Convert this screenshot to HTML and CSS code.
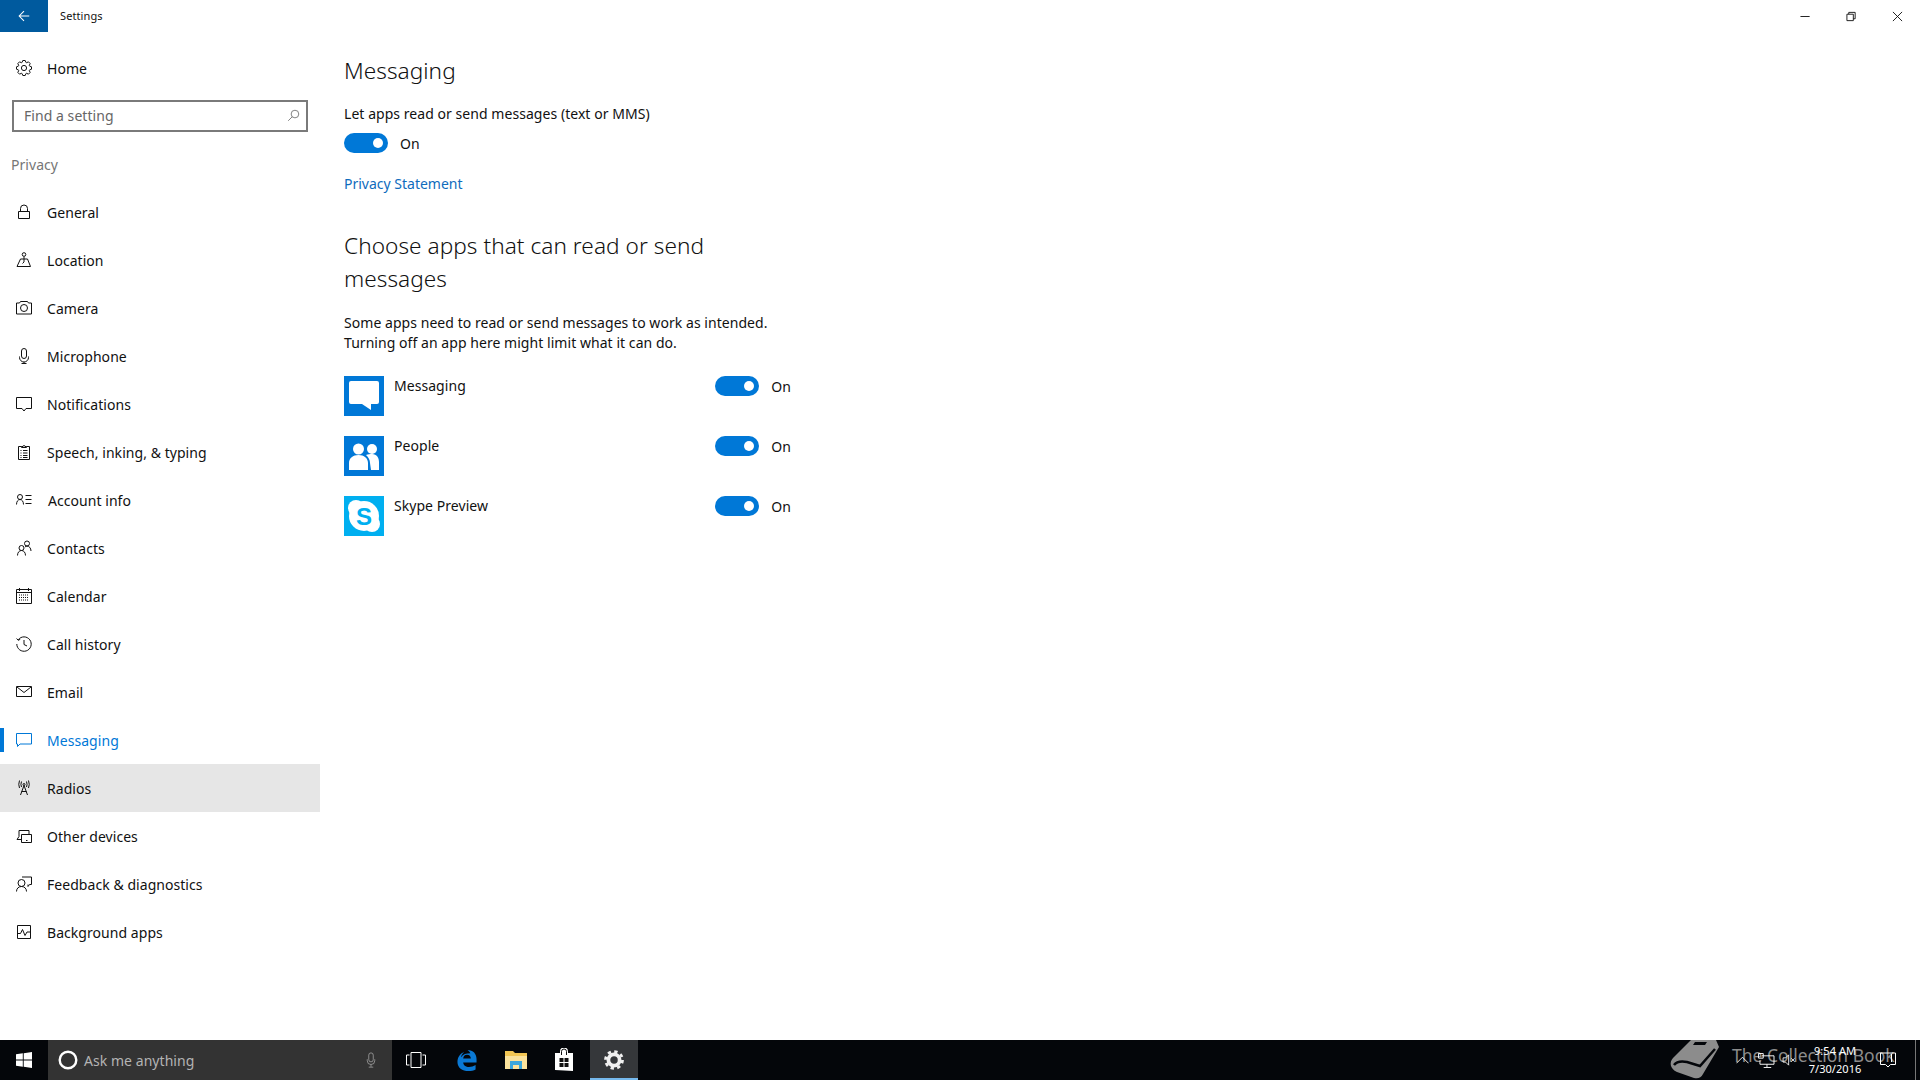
FILE: index.html
```
<!DOCTYPE html>
<html lang="en">
<head>
<meta charset="utf-8">
<title>Settings</title>
<link rel="stylesheet" href="styles.css">
</head>
<body>
<div class="window">
  <header class="titlebar">
    <button class="back"><svg viewBox="0 0 16 16" class="ico14"><path d="M14 8H2.500M8 2.500 2.500 8 8 13.500"/></svg></button>
    <span class="app-title">Settings</span>
    <div class="caption">
      <span class="cap-btn"><svg viewBox="0 0 12 12" class="ico11"><path d="M.5 6h10"/></svg></span>
      <span class="cap-btn"><svg viewBox="0 0 12 12" class="ico11"><path d="M1 3.500h7v7H1zM3 3.500V1.500h7v7H8"/></svg></span>
      <span class="cap-btn"><svg viewBox="0 0 12 12" class="ico11"><path d="M1 1l10 10M11 1 1 11"/></svg></span>
    </div>
  </header>
  <div class="main">
    <nav class="sidebar">
      <a class="nav-item home">
        <svg viewBox="0 0 16 16" class="nav-ico"><circle cx="8" cy="8" r="2.600"/><path d="M6.080 2.420 6.810.49H9.190L9.920 2.420 10.590 2.700 12.470 1.850 14.150 3.530 13.300 5.410 13.580 6.080 15.510 6.810V9.190L13.580 9.920 13.300 10.590 14.150 12.470 12.470 14.150 10.590 13.300 9.920 13.580 9.190 15.510H6.810L6.080 13.580 5.410 13.300 3.530 14.150 1.850 12.470 2.700 10.590 2.420 9.920 .49 9.190V6.810L2.420 6.080 2.700 5.410 1.850 3.530 3.530 1.850 5.410 2.700Z"/></svg>
        <span>Home</span>
      </a>
      <div class="search"><span>Find a setting</span><svg viewBox="0 0 16 16" class="search-ico"><circle cx="9.800" cy="6.200" r="4.700"/><path d="M6.400 9.600 1.500 14.500"/></svg></div>
      <div class="group">Privacy</div>
      <a class="nav-item"><svg viewBox="0 0 16 16" class="nav-ico"><path d="M2.500 7.500h11v7h-11zM4.500 7.500V4.500a3.500 3.500 0 0 1 7 0v3"/></svg><span>General</span></a>
      <a class="nav-item"><svg viewBox="0 0 16 16" class="nav-ico"><circle cx="8" cy="2.500" r="1.800"/><path d="M8 4.500V10M4.500 7h7l3 7.500H1zM8 10l-1.500 1.500"/></svg><span>Location</span></a>
      <a class="nav-item"><svg viewBox="0 0 16 16" class="nav-ico"><path d="M.5 3h3l1-1.500h7l1 1.500h3v11H.5z"/><circle cx="8" cy="8" r="3.500"/></svg><span>Camera</span></a>
      <a class="nav-item"><svg viewBox="0 0 16 16" class="nav-ico"><rect x="5.500" y=".5" width="5" height="10" rx="2.500"/><path d="M3.500 8.500v1a4.500 4.500 0 0 0 9 0v-1M8 14v2M5.500 15.500h5"/></svg><span>Microphone</span></a>
      <a class="nav-item"><svg viewBox="0 0 16 16" class="nav-ico"><path d="M.5 1.500h15v11H10L8 15l-2-2.500H.5z"/></svg><span>Notifications</span></a>
      <a class="nav-item"><svg viewBox="0 0 16 16" class="nav-ico"><path d="M5.500 2.500h-3v13h11v-13h-3M5.500 3.500v-1h1.500a1 1 0 0 1 2 0h1.500v1zM4.500 6.500h1M7 6.500h4.500M4.500 9h1M7 9h4.500M4.500 11.500h1M7 11.500h4.500M4.500 13.500h1M7 13.500h4.500"/></svg><span>Speech, inking, &amp; typing</span></a>
      <a class="nav-item acct"><svg viewBox="0 0 16 16" class="nav-ico"><circle cx="4" cy="5" r="2.500"/><path d="M.5 12.500c0-3 1.500-5 3.500-5s3.500 2 3.500 5M9.500 3.500h6M9.500 7.500h6M9.500 11.500h6"/></svg><span>Account info</span></a>
      <a class="nav-item"><svg viewBox="0 0 16 16" class="nav-ico"><circle cx="5.500" cy="8" r="2.500"/><path d="M1.500 15.500c0-3 1.700-5 4-5s4 2 4 5"/><circle cx="11" cy="3.500" r="2.500"/><path d="M9 7c.6-.6 1.300-.9 2-.9 2.200 0 4 1.900 4 4.900"/></svg><span>Contacts</span></a>
      <a class="nav-item"><svg viewBox="0 0 16 16" class="nav-ico"><path d="M.5 1.500h15v14H.5zM.5 4.500h15M3.500 0v3M12.500 0v3"/><path class="dots" d="M3 7h10M3 9.500h10M3 12h10"/></svg><span>Calendar</span></a>
      <a class="nav-item"><svg viewBox="0 0 16 16" class="nav-ico"><path d="M2.200 3.800A7.200 7.200 0 1 1 .8 8M.6 2.500l1.600 1.800 2-1M8 4v4.500l3 1.500"/></svg><span>Call history</span></a>
      <a class="nav-item"><svg viewBox="0 0 16 16" class="nav-ico"><path d="M.5 2.500h15v10H.5zM1 3l7 5.500L15 3"/></svg><span>Email</span></a>
      <a class="nav-item active"><svg viewBox="0 0 16 16" class="nav-ico"><path d="M.5 1.500h15v10.500H4L1.500 14.500V12h-1z"/></svg><span>Messaging</span></a>
      <a class="nav-item hover"><svg viewBox="0 0 16 16" class="nav-ico"><circle cx="8" cy="4.500" r="1"/><path d="M5.500 1.500Q4.300 4.500 5.500 7M10.500 1.500Q11.700 4.500 10.500 7M3.500.5Q2 4.500 3.500 8M12.500.5Q14 4.500 12.500 8M8 5.500 4.500 15M8 5.500l3.500 9.500M5.500 11.500h5"/></svg><span>Radios</span></a>
      <a class="nav-item"><svg viewBox="0 0 16 16" class="nav-ico"><path d="M5.500 11.500H1l2-3V2.500h10V6M5.500 6.500h10v8h-10zM10 12.500h1.500"/></svg><span>Other devices</span></a>
      <a class="nav-item"><svg viewBox="0 0 16 16" class="nav-ico"><circle cx="5.500" cy="7" r="3.500"/><path d="M.5 15.500c0-3 2-5 5-5s5 2 5 5M6 1h9.500v7.500h-2l-1.500 2v-2"/></svg><span>Feedback &amp; diagnostics</span></a>
      <a class="nav-item"><svg viewBox="0 0 16 16" class="nav-ico"><path d="M1.500 1.500h13v13h-13zM1.500 9.500h3l2-4 2.500 6 2-3.500h3.500"/></svg><span>Background apps</span></a>
    </nav>
    <section class="content">
      <h1>Messaging</h1>
      <p class="lead">Let apps read or send messages (text or MMS)</p>
      <div class="switch-line"><span class="toggle"></span><span>On</span></div>
      <a class="link">Privacy Statement</a>
      <h2>Choose apps that can read or send messages</h2>
      <p class="desc">Some apps need to read or send messages to work as intended. Turning off an app here might limit what it can do.</p>
      <div class="apps">
        <div class="app-row">
          <svg viewBox="0 0 40 40" class="app-ico msg"><rect width="40" height="40"/><path class="white" d="M5 7a2 2 0 0 1 2-2h26a2 2 0 0 1 2 2v19a2 2 0 0 1-2 2h-6v6l-9-6H7a2 2 0 0 1-2-2z"/></svg>
          <span class="app-name">Messaging</span>
          <div class="switch-line"><span class="toggle"></span><span>On</span></div>
        </div>
        <div class="app-row">
          <svg viewBox="0 0 40 40" class="app-ico msg"><rect width="40" height="40"/><circle class="white" cx="14.500" cy="13" r="5.500"/><circle class="white" cx="28" cy="13" r="5"/><path class="white" d="M5 34V27c0-5 4-8 9.500-8s9.500 3 9.500 8v7zM22 19c2-1 4-1 6-1 5 0 7 4 7 8v8h-8l-1-7c0-3-1.500-6-4-8z"/></svg>
          <span class="app-name">People</span>
          <div class="switch-line"><span class="toggle"></span><span>On</span></div>
        </div>
        <div class="app-row">
          <svg viewBox="0 0 40 40" class="app-ico skype"><rect width="40" height="40"/><circle class="white" cx="12" cy="12" r="8"/><circle class="white" cx="28" cy="28" r="8"/><circle class="white" cx="20" cy="20" r="15"/><text x="20" y="28.500" text-anchor="middle" class="skype-s">S</text></svg>
          <span class="app-name">Skype Preview</span>
          <div class="switch-line"><span class="toggle"></span><span>On</span></div>
        </div>
      </div>
    </section>
  </div>
  <footer class="taskbar">
    <span class="tb-btn start"><svg viewBox="0 0 16 16" class="ico16"><path class="white" d="M0 2.300 6.800 1.300V7.500H0zM7.700 1.200 16 0V7.500H7.700zM0 8.400H6.800V14.700L0 13.700zM7.700 8.400H16V16L7.700 14.800z"/></svg></span>
    <div class="cortana">
      <svg viewBox="0 0 20 20" class="ico20"><circle cx="10" cy="10" r="8.300" class="ring"/></svg>
      <span class="ask">Ask me anything</span>
      <svg viewBox="0 0 16 20" class="mic"><rect x="5" y=".5" width="6" height="12" rx="3"/><path d="M3 9v2a5 5 0 0 0 10 0V9M8 16v3M5 19.500h6"/></svg>
    </div>
    <span class="tb-btn"><svg viewBox="0 0 20 16" class="taskview"><path d="M5 .5h10v15H5zM3.500 3H.5v10h3M16.500 3h3v10h-3"/></svg></span>
    <span class="tb-btn tb-edge"><svg viewBox="0 0 20 22" class="edge"><path d="M10.500 0C16.500 0 20 4 20 9.500V13H6c.3 3.200 3 4.700 6 4.700 2.500 0 5-.7 7-2v4.600C17 21.500 14.500 22 11.500 22 5 22 0 18.500 0 12.500 0 8 2.500 3.500 7 2 4.800 4 4 6 3.800 7.500 6 4.500 9 3.500 13.500 3.500 12.500 1.500 11.500.5 10.500 0zM6 9h8c0-2.500-1.500-4-4-4S6.300 6.500 6 9z"/></svg></span>
    <span class="tb-btn tb-folder"><svg viewBox="0 0 22 18" class="folder"><path class="fy" d="M0 0h8l2 2h12v16H0z"/><path class="fl" d="M0 5h22v13H0z"/><path class="fb" d="M5 10h12v8h-3v-4H8v4H5z"/></svg></span>
    <span class="tb-btn"><svg viewBox="0 0 20 24" class="store"><path class="white" d="M1 5h5V3.500a4 4 0 0 1 8 0V5h5v18l-18-1z"/><path class="bagline" d="M7.500 7V3.500a2.500 2.500 0 0 1 5 0V7"/><path class="bagwin" d="M5.500 10h4v4h-4zM10.500 10h4v4h-4zM5.500 15h4v4h-4zM10.500 15h4v4h-4z"/></svg></span>
    <span class="tb-btn current"><svg viewBox="0 0 16 16" class="tbgear"><circle cx="8" cy="8" r="4.500" class="g1"/><circle cx="8" cy="8" r="6.800" class="g2"/></svg></span>
    <div class="tray">
      <svg viewBox="0 0 14 8" class="chev"><path d="M.5 7.500 7 1l6.500 6.500"/></svg>
      <svg viewBox="0 0 18 16" class="net"><path d="M4 3h13v9H2V8M9.500 12v3M6 15.500h8M.5.5h5v5h-5z"/></svg>
      <svg viewBox="0 0 16 14" class="vol"><path d="M.5 4.500h3L7 1v12L3.500 9.500h-3zM10 5l4 4M14 5l-4 4"/></svg>
      <div class="clock"><span>9:54 AM</span><span>7/30/2016</span></div>
      <svg viewBox="0 0 16 16" class="action"><path d="M.5 1h15v11.500H10.500L8 15l-2.500-2.500H.5zM11.500 2v8"/></svg>
      <span class="peek"></span>
    </div>
    <div class="watermark">
      <svg viewBox="0 4 60 40" class="book"><path d="M31 4H56L59 11 43 38C41 42 38 43 34 42L17 36C10 33 9 26 13 22Z"/><path class="page" d="M14 29C17 25 22 25 27 26L40 30 55 13"/><path class="slot" d="M35 6H47L45 9H33Z"/></svg>
      <span class="mark-text">The Collection Book</span>
    </div>
  </footer>
</div>
</body>
</html>
```
FILE: styles.css
```
* { box-sizing: border-box; }
html, body { margin: 0; height: 100%; }
body { font-family: "Noto Sans", "Open Sans", sans-serif; font-size: 14px; letter-spacing: .05px; color: #111; background: #fff; overflow: hidden; }
svg { fill: none; stroke: currentColor; stroke-width: 1; display: block; flex: none; }
.window { display: flex; flex-direction: column; height: 1080px; }

.titlebar { display: flex; align-items: center; height: 32px; flex: none; }
.back { width: 48px; height: 32px; background: #005a9e; color: #fff; border: 0; padding: 0; display: flex; align-items: center; justify-content: center; }
.ico14 { width: 14px; height: 14px; stroke-width: 1.2; }
.app-title { font-size: 11px; letter-spacing: .1px; margin-left: 12px; line-height: 32px; height: 32px; }
.caption { margin-left: auto; display: flex; }
.cap-btn { width: 46px; height: 32px; display: flex; align-items: center; justify-content: center; }
.ico11 { width: 11px; height: 11px; }

.main { flex: 1; display: flex; min-height: 0; }
.sidebar { width: 320px; flex: none; display: flex; flex-direction: column; }
.nav-item { position: relative; display: flex; align-items: center; height: 48px; flex: none; padding-left: 16px; gap: 15px; }
.nav-ico { width: 16px; height: 16px; }
.home { margin-top: 12px; }
.acct { gap: 16px; }
.dots { stroke-dasharray: 1 1; }
.search { margin: 8px 12px 0; height: 32px; border: 2px solid #7a7a7a; display: flex; align-items: center; justify-content: space-between; padding: 0 6px 2px 10px; color: #666; }
.search-ico { width: 13px; height: 13px; color: #666; }
.group { margin: 20px 0 10px 11px; line-height: 26px; color: #767676; height: 26px; }
.active { color: #0078d7; }
.active::before { content: ""; position: absolute; left: 0; top: 12px; width: 4px; height: 24px; background: #0078d7; }
.hover { background: #e6e6e6; }

.content { padding: 23px 0 0 24px; width: 824px; }
h1 { font-size: 22.600px; font-weight: 300; line-height: 32px; margin: 0; }
.lead { margin: 17px 0 0; line-height: 20px; }
.switch-line { display: flex; align-items: center; gap: 12px; height: 20px; }
.content > .switch-line { margin-top: 9px; }
.toggle { position: relative; width: 44px; height: 20px; border-radius: 10px; background: #0078d7; flex: none; }
.toggle::after { content: ""; position: absolute; right: 5px; top: 5px; width: 10px; height: 10px; border-radius: 50%; background: #fff; }
.link { display: block; margin-top: 21px; line-height: 20px; color: #0f6cbd; letter-spacing: 0; }
h2 { font-size: 22.600px; font-weight: 300; line-height: 33px; margin: 35px 0 0; width: 420px; }
.desc { margin: 18px 0 0; line-height: 20px; width: 440px; }
.apps { margin-top: 23px; display: flex; flex-direction: column; gap: 20px; }
.app-row { display: flex; height: 40px; width: 447px; }
.app-ico { width: 40px; height: 40px; stroke: none; }
.msg rect { fill: #0078d7; }
.skype rect { fill: #00aff0; }
.white { fill: #fff; stroke: none; }
.app-name { margin-left: 10px; line-height: 20px; flex: 1; }
.skype-s { font-family: "Liberation Sans", sans-serif; font-weight: 700; font-size: 24px; fill: #00aff0; }

.taskbar { position: relative; height: 40px; flex: none; background: #04060a; color: #fff; display: flex; align-items: center; overflow: hidden; }
.tb-btn { width: 48px; height: 40px; display: flex; align-items: center; justify-content: center; flex: none; }
.ico16 { width: 16px; height: 16px; }
.cortana { width: 344px; height: 40px; background: #333; display: flex; align-items: center; padding-left: 10px; }
.ico20 { width: 20px; height: 20px; }
.ring { stroke: #fff; stroke-width: 2.4; }
.ask { margin-left: 6px; color: #b4b4b4; flex: 1; }
.mic { width: 12px; height: 16px; margin-right: 15px; color: #aaa; }
.taskview { width: 20px; height: 16px; }
.tb-edge { margin-left: 3px; }
.tb-folder { margin-left: 1px; }
.edge { width: 20px; height: 21px; fill: #0a78d4; stroke: none; }
.folder { width: 22px; height: 18px; stroke: none; }
.fy { fill: #f3c654; }
.fl { fill: #fbe29c; }
.fb { fill: #3aa6dc; }
.store { width: 20px; height: 24px; color: #111; }
.bagline { stroke: #111; }
.bagwin { fill: #111; stroke: none; }
.current { margin-left: 2px; background: #35373a; border-bottom: 2px solid #76b9ed; padding-top: 2px; }
.tbgear { width: 20px; height: 20px; }
.g1 { stroke-width: 3; stroke: #f0f0f0; }
.g2 { stroke-width: 2.2; stroke: #f0f0f0; stroke-dasharray: 2.67 2.67; }
.tray { margin-left: auto; display: flex; align-items: center; height: 40px; font-size: 11px; position: relative; z-index: 1; }
.chev { width: 13px; height: 8px; margin-right: 9px; }
.net { width: 17px; height: 15px; margin-right: 7px; }
.vol { width: 15px; height: 12px; }
.clock { width: 76px; margin-right: 7px; display: flex; flex-direction: column; align-items: center; line-height: 18px; }
.action { width: 16px; height: 16px; margin-right: 19px; }
.peek { width: 1px; height: 40px; background: #777; margin-right: 4px; }
.watermark { position: absolute; left: 1660px; top: 0; height: 40px; display: flex; align-items: center; gap: 12px; color: #8c8c8c; font-size: 17.500px; letter-spacing: 0; white-space: nowrap; }
.mark-text { padding-bottom: 10px; }
.book { width: 60px; height: 40px; fill: #8c8c8c; stroke: none; }
.book .page { fill: none; stroke: #04060a; stroke-width: 2.500; }
.book .slot { fill: #04060a; }
```
